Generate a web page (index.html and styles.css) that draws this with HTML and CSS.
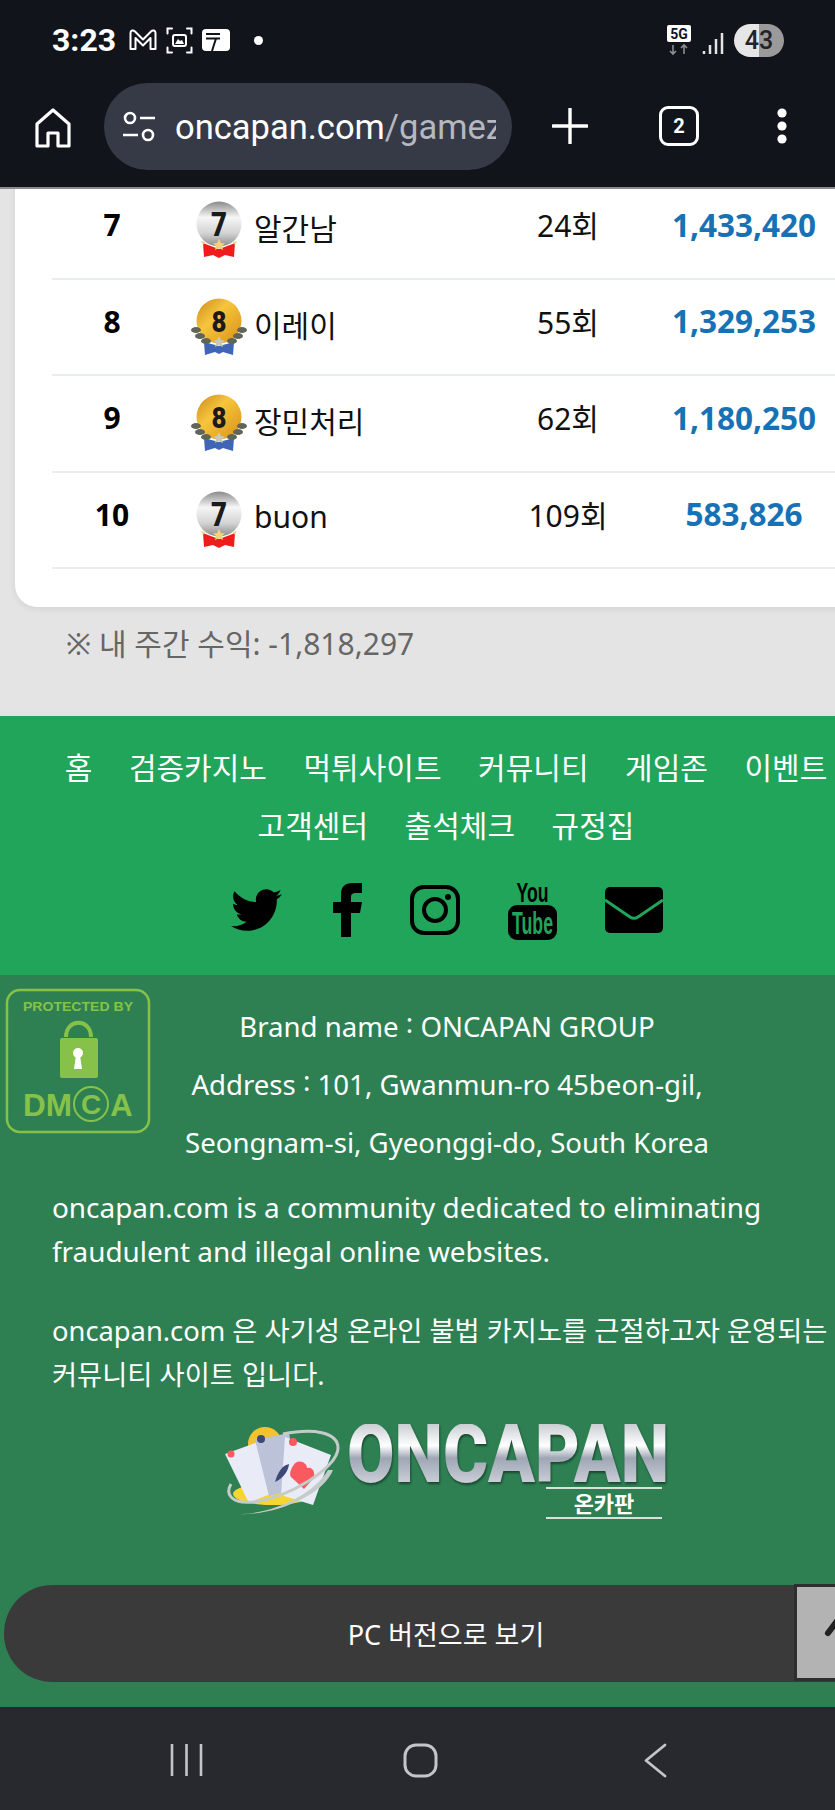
FILE: index.html
```html
<!DOCTYPE html>
<html lang="ko">
  <head>
    <meta charset="utf-8" />
    <meta name="viewport" content="width=device-width, initial-scale=1.0" />
    <title>oncapan.com</title>
    <link rel="stylesheet" href="styles.css">
  </head>
  <body>
    <svg class="defs" width="0" height="0">
      <defs>
        <linearGradient id="silver" x1="0" y1="0" x2="0" y2="1">
          <stop offset="0" stop-color="#8a8a8a" />
          <stop offset="0.35" stop-color="#f6f6f6" />
          <stop offset="0.7" stop-color="#d4d4d4" />
          <stop offset="1" stop-color="#8c8c8c" />
        </linearGradient>
        <linearGradient id="gold" x1="0" y1="0" x2="1" y2="1">
          <stop offset="0" stop-color="#c98a1c" />
          <stop offset="0.4" stop-color="#f6c53c" />
          <stop offset="1" stop-color="#d98f18" />
        </linearGradient>
        <symbol id="badge7" viewBox="0 0 56 58">
          <path d="M12 42l5 2 11 4 11-4 5-2-1 14-9-2-6 3-6-3-9 2z" fill="#ef1c1c" />
          <circle cx="28" cy="23" r="22.500" fill="url(#silver)" />
          <path d="M28 38l2 4 4 .4-3 2.600 1 4-4-2-4 2 1-4-3-2.600 4-.4z" fill="#f3d27a" />
          <path d="M10 40l4 1-2 3zM46 40l-4 1 2 3z" fill="#f3d27a" />
          <text x="28" y="35" class="badge-num" textLength="16" lengthAdjust="spacingAndGlyphs">7</text>
        </symbol>
        <symbol id="badge8" viewBox="0 0 56 58">
          <path d="M13 44l15 4 15-4-1 13-10-3-4 2-4-2-10 3z" fill="#3f66b5" />
          <circle cx="28" cy="23" r="22.500" fill="url(#gold)" />
          <g fill="#5f6658">
            <ellipse cx="5" cy="32" rx="5" ry="3" />
            <ellipse cx="9" cy="38" rx="5" ry="3" />
            <ellipse cx="15" cy="43" rx="5" ry="3" />
            <ellipse cx="51" cy="32" rx="5" ry="3" />
            <ellipse cx="47" cy="38" rx="5" ry="3" />
            <ellipse cx="41" cy="43" rx="5" ry="3" />
          </g>
          <path d="M28 38l2 4 4 .4-3 2.600 1 4-4-2-4 2 1-4-3-2.600 4-.4z" fill="#c9c9b8" />
          <text x="28" y="34" class="badge-num badge-num-8" textLength="15" lengthAdjust="spacingAndGlyphs">8</text>
        </symbol>
      </defs>
    </svg>

    <div class="topbar">
      <div class="status">
        <span class="clock">3:23</span>
        <svg class="st-icon" width="28" height="22" viewBox="0 0 28 22">
          <path d="M1.500 20V4c0-2.500 2.500-3.500 4.500-1.500l8 8 8-8c2-2 4.500-1 4.500 1.500v16h-5V9l-7.500 7.500L6.500 9v11z" fill="none" stroke="#fff" stroke-width="2" stroke-linejoin="round" />
        </svg>
        <svg class="st-icon" width="27" height="27" viewBox="0 0 27 27">
          <path d="M6 1.500H1.500v5M21 1.500h4.500v5M6 25.500H1.500v-5M21 25.500h4.500v-5" fill="none" stroke="#fff" stroke-width="2" stroke-linecap="round" />
          <rect x="7" y="8" width="13" height="11" rx="2" fill="none" stroke="#fff" stroke-width="2" />
          <path d="M9 17l3-5 2 2 2-1 2 4z" fill="#fff" />
        </svg>
        <svg class="st-icon" width="28" height="22" viewBox="0 0 28 22">
          <rect width="28" height="22" rx="4" fill="#fff" />
          <path d="M4 5h14M4 9.500h14M14 9.500L10 22" fill="none" stroke="#12141b" stroke-width="2" />
        </svg>
        <span class="st-dot"></span>
        <span class="st-right">
          <svg width="26" height="32" viewBox="0 0 26 32">
            <rect x="1" y="1" width="24" height="17" rx="2" fill="#fff" />
            <text x="13" y="15" class="five-g">5G</text>
            <path d="M7 21v9M4 27l3 3 3-3M18 30v-9M15 24l3-3 3 3" fill="none" stroke="#8d8d8d" stroke-width="1.600" />
          </svg>
          <svg class="signal" width="22" height="24" viewBox="0 0 22 24">
            <path d="M2 20v3M8 14v9M14 8v15M20 2v21" stroke="#e4e4e4" stroke-width="2.500" />
          </svg>
          <span class="battery">43</span>
        </span>
      </div>
      <div class="toolbar">
        <svg class="tb-home" width="36" height="40" viewBox="0 0 36 40">
          <path d="M2 38V16L18 2l16 14v22H23V25H13v13z" fill="none" stroke="#fff" stroke-width="3.200" stroke-linejoin="round" />
        </svg>
        <div class="pill">
          <svg width="34" height="32" viewBox="0 0 34 32">
            <circle cx="8" cy="7" r="5" fill="none" stroke="#fff" stroke-width="2.600" />
            <path d="M18 7h15M1 24h15" stroke="#fff" stroke-width="2.600" />
            <circle cx="26" cy="24" r="5" fill="none" stroke="#fff" stroke-width="2.600" />
          </svg>
          <div class="url">oncapan.com<span class="url-path">/gamez</span></div>
        </div>
        <svg class="tb-plus" width="36" height="36" viewBox="0 0 36 36">
          <path d="M18 1v34M1 18h34" stroke="#fff" stroke-width="3.400" stroke-linecap="round" />
        </svg>
        <span class="tabs">2</span>
        <svg class="tb-more" width="12" height="36" viewBox="0 0 12 36">
          <circle cx="6" cy="5" r="4.600" fill="#fff" />
          <circle cx="6" cy="18" r="4.600" fill="#fff" />
          <circle cx="6" cy="31" r="4.600" fill="#fff" />
        </svg>
      </div>
    </div>

    <main class="page">
      <section class="rank-section">
        <div class="rank-card">
          <ul class="rank-list">
            <li class="rank-row">
              <span class="pos">7</span>
              <span class="player"><svg class="badge"><use href="#badge7" /></svg><span class="name">알간남</span></span>
              <span class="count">24회</span>
              <span class="amount">1,433,420</span>
            </li>
            <li class="rank-row">
              <span class="pos">8</span>
              <span class="player"><svg class="badge"><use href="#badge8" /></svg><span class="name">이레이</span></span>
              <span class="count">55회</span>
              <span class="amount">1,329,253</span>
            </li>
            <li class="rank-row">
              <span class="pos">9</span>
              <span class="player"><svg class="badge"><use href="#badge8" /></svg><span class="name">장민처리</span></span>
              <span class="count">62회</span>
              <span class="amount">1,180,250</span>
            </li>
            <li class="rank-row">
              <span class="pos">10</span>
              <span class="player"><svg class="badge"><use href="#badge7" /></svg><span class="name">buon</span></span>
              <span class="count">109회</span>
              <span class="amount">583,826</span>
            </li>
          </ul>
        </div>
        <p class="my-profit">※ 내 주간 수익: -1,818,297</p>
      </section>

      <footer>
        <div class="foot-top">
          <nav class="foot-menu">
            <a>홈</a><a>검증카지노</a><a>먹튀사이트</a><a>커뮤니티</a><a>게임존</a><a>이벤트</a>
            <a>고객센터</a><a>출석체크</a><a>규정집</a>
          </nav>
          <div class="social">
            <svg class="tw" width="51" height="42" viewBox="0 0 512 416">
              <path d="M459.37 103.716c.325 4.548.325 9.097.325 13.645 0 138.72-105.583 298.558-298.558 298.558-59.452 0-114.68-17.219-161.137-47.106 8.447.974 16.568 1.299 25.34 1.299 49.055 0 94.213-16.568 130.274-44.832-46.132-.975-84.792-31.188-98.112-72.772 6.498.974 12.995 1.624 19.818 1.624 9.421 0 18.843-1.3 27.614-3.573-48.081-9.747-84.143-51.98-84.143-102.985v-1.299c13.969 7.797 30.214 12.67 47.431 13.319-28.264-18.843-46.781-51.005-46.781-87.391 0-19.492 5.197-37.36 14.294-52.954 51.655 63.675 129.3 105.258 216.365 109.807-1.624-7.797-2.599-15.918-2.599-24.04 0-57.828 46.782-104.934 104.934-104.934 30.213 0 57.502 12.67 76.67 33.137 23.715-4.548 46.456-13.32 66.599-25.34-7.798 24.366-24.366 44.833-46.132 57.827 21.117-2.273 41.584-8.122 60.426-16.243-14.292 20.791-32.161 39.308-52.628 54.253z" />
            </svg>
            <svg width="29" height="54" viewBox="0 0 29 54">
              <path d="M8 54V30H0V19h8v-8C8 3 13 0 20 0h9v10h-6c-3 0-5 1-5 4v5h11l-2 11h-9v24z" />
            </svg>
            <svg width="50" height="50" viewBox="0 0 50 50">
              <rect x="2" y="2" width="46" height="46" rx="12" fill="none" stroke="#000" stroke-width="4" />
              <circle cx="25" cy="25" r="11" fill="none" stroke="#000" stroke-width="4" />
              <circle cx="38" cy="12" r="3" />
            </svg>
            <svg width="49" height="60" viewBox="0 0 49 60">
              <text x="24.500" y="22" class="yt-you" textLength="32" lengthAdjust="spacingAndGlyphs">You</text>
              <rect y="25" width="49" height="35" rx="9" />
              <text x="24.500" y="54" class="yt-tube" textLength="41" lengthAdjust="spacingAndGlyphs">Tube</text>
            </svg>
            <svg width="58" height="46" viewBox="0 0 58 46">
              <rect width="58" height="46" rx="5" />
              <path d="M0 13l25 17c3 2 5 2 8 0l25-17" fill="none" stroke="#21a55a" stroke-width="3" />
            </svg>
          </div>
        </div>

        <div class="foot-info">
          <div class="brand-block">
            <svg class="dmca" width="146" height="146" viewBox="0 0 146 146">
              <rect x="2" y="2" width="142" height="142" rx="13" fill="none" stroke="#86c24a" stroke-width="2.500" />
              <text x="73" y="23" class="dmca-top" textLength="110" lengthAdjust="spacingAndGlyphs">PROTECTED BY</text>
              <path d="M61 49c0-19 25-19 25 0" fill="none" stroke="#86c24a" stroke-width="4" />
              <rect x="55" y="50" width="38" height="40" rx="2" fill="#86c24a" />
              <circle cx="73" cy="65" r="5" fill="#fff" />
              <path d="M71 67h4l2 14h-8z" fill="#fff" />
              <text x="42.500" y="128" class="dmca-word" textLength="49" lengthAdjust="spacingAndGlyphs">DM</text>
              <circle cx="86" cy="116" r="17" fill="none" stroke="#86c24a" stroke-width="2" />
              <text x="86" y="126" class="dmca-word dmca-c">C</text>
              <text x="116.500" y="128" class="dmca-word">A</text>
            </svg>
            <div class="brand-lines">
              <p>Brand name <span class="colon">:</span> ONCAPAN GROUP</p>
              <p>Address <span class="colon">:</span> 101, Gwanmun-ro 45beon-gil,</p>
              <p>Seongnam-si, Gyeonggi-do, South Korea</p>
            </div>
          </div>
          <p class="about">oncapan.com is a community dedicated to eliminating fraudulent and illegal online websites.</p>
          <p class="about about-kr">oncapan.com 은 사기성 온라인 불법 카지노를 근절하고자 운영되는 커뮤니티 사이트 입니다.</p>
          <div class="logo">
            <svg width="122" height="94" viewBox="0 0 122 94">
              <circle cx="42" cy="20" r="17" fill="#f2c230" />
              <ellipse cx="50" cy="70" rx="40" ry="11" fill="#f5d532" />
              <path d="M2 30l36-13 16 50-28 12z" fill="#e9ecf7" />
              <path d="M32 16l34-7 10 55-30 8z" fill="#bcc3d8" />
              <path d="M62 13l46 18-18 50-32-10z" fill="#e9ecf7" />
              <path d="M70 42c4-8 14-4 14 2 6-2 10 6 5 12l-8 9-13-12c-2-3 0-8 2-11z" fill="#f9595f" />
              <path d="M54 52c4-8 6-10 12-12-1 8-6 14-14 18z" fill="#3c4876" />
              <circle cx="70" cy="18" r="4" fill="#f9595f" />
              <circle cx="38" cy="15" r="4" fill="#3c4876" />
              <circle cx="8" cy="30" r="3.500" fill="#f9595f" />
              <path d="M60 10c30-6 55-2 55 14 0 20-50 50-85 54C8 80 2 70 8 60" fill="none" stroke="#c5cbc8" stroke-width="3" />
              <path d="M105 46c-15 25-55 44-90 44 35 2 85-18 95-44z" fill="#c5cbc8" />
            </svg>
            <div class="logo-text">
              <span class="logo-name">ONCAPAN</span>
              <span class="logo-kr">온카판</span>
            </div>
          </div>
          <div class="pc-bar">
            <a class="pc-link">PC 버전으로 보기</a>
            <span class="to-top">
              <svg width="38" height="90" viewBox="0 0 38 90"><path d="M31 46l9-12" stroke="#222" stroke-width="6" stroke-linecap="round" /></svg>
            </span>
          </div>
        </div>
      </footer>
    </main>

    <div class="navbar">
      <svg width="33" height="34" viewBox="0 0 33 34">
        <path d="M2 1v32M16.500 1v32M31 1v32" stroke="#c4c5c8" stroke-width="2.600" />
      </svg>
      <svg width="35" height="35" viewBox="0 0 35 35">
        <rect x="2" y="2" width="31" height="31" rx="11" fill="none" stroke="#c4c5c8" stroke-width="3" />
      </svg>
      <svg class="nav-back" width="24" height="35" viewBox="0 0 24 35">
        <path d="M22 2L3 17.500 22 33" fill="none" stroke="#c4c5c8" stroke-width="2.800" stroke-linecap="round" stroke-linejoin="round" />
      </svg>
    </div>
  </body>
</html>
```

FILE: styles.css
```css
html, body {
  margin: 0;
  padding: 0;
}

body {
  width: 835px;
  height: 1810px;
  overflow: hidden;
  font-family: "Noto Sans", "Noto Sans CJK KR", sans-serif;
  background: #e4e4e4;
  display: flex;
  flex-direction: column;
}

.defs {
  position: absolute;
}

/* phone + browser chrome */
.topbar {
  height: 189px;
  flex: none;
  box-sizing: border-box;
  background: #12141b;
  border-bottom: 2px solid #8b8c90;
  color: #fff;
}

.status {
  height: 80px;
  box-sizing: border-box;
  padding: 0 51px 0 52px;
  display: flex;
  align-items: center;
  gap: 9px;
}

.clock {
  font-family: "Roboto", sans-serif;
  font-size: 32px;
  font-weight: 700;
  margin-right: 4px;
}

.st-dot {
  width: 9px;
  height: 9px;
  margin-left: 15px;
  border-radius: 50%;
  background: #fff;
}

.st-right {
  margin-left: auto;
  display: flex;
  align-items: center;
  gap: 10px;
}

.five-g {
  font-family: "Roboto", sans-serif;
  font-size: 14px;
  font-weight: 700;
  text-anchor: middle;
  fill: #12141b;
}

.signal {
  margin-top: 6px;
}

.battery {
  width: 50px;
  height: 33px;
  border-radius: 17px;
  background: linear-gradient(90deg, #e6e6e6 0 50%, #9a9a9a 50%);
  color: #22242a;
  font-family: "Roboto", sans-serif;
  font-size: 25px;
  font-weight: 500;
  text-align: center;
  line-height: 33px;
}

.toolbar {
  height: 106px;
  padding: 3px 0 0 35px;
  box-sizing: border-box;
  display: flex;
  align-items: flex-start;
}

.tb-home {
  margin-top: 25px;
}

.pill {
  width: 408px;
  height: 87px;
  margin-left: 33px;
  border-radius: 44px;
  background: #363a47;
  display: flex;
  align-items: center;
  padding-left: 18px;
  box-sizing: border-box;
  gap: 19px;
}

.url {
  width: 321px;
  overflow: hidden;
  white-space: nowrap;
  font-family: "Roboto", sans-serif;
  font-size: 34.500px;
  color: #fff;
}

.url-path {
  color: #b6b8c0;
}

.tb-plus {
  margin: 25px 0 0 40px;
}

.tabs {
  width: 34px;
  height: 34px;
  margin: 23px 0 0 71px;
  border: 3px solid #fff;
  border-radius: 9px;
  font-family: "Roboto", sans-serif;
  font-size: 20px;
  font-weight: 700;
  line-height: 34px;
  text-align: center;
}

.tb-more {
  margin: 25px 0 0 77px;
}

/* page */
.page {
  flex: 1;
  overflow: hidden;
}

.rank-section {
  display: flow-root;
  height: 527px;
  padding-left: 15px;
  box-sizing: border-box;
}

.rank-card {
  width: 880px;
  height: 424px;
  margin-top: -6px;
  box-sizing: border-box;
  padding: 0 0 38px 37px;
  background: #fff;
  border-radius: 0 0 22px 22px;
  box-shadow: 0 2px 6px rgba(0, 0, 0, 0.08);
}

.rank-list {
  list-style: none;
  margin: 0;
  padding: 0;
}

.rank-row {
  height: 96.500px;
  box-sizing: border-box;
  display: grid;
  grid-template-columns: 120px 328px 136px 216px;
  align-items: center;
  border-bottom: 2px solid #e9edf0;
  font-size: 30px;
  color: #111;
}

.pos {
  text-align: center;
  font-weight: 700;
  font-size: 30px;
  color: #000;
  padding-bottom: 11px;
}

.player {
  display: flex;
  align-items: center;
  padding-left: 19px;
  font-size: 30px;
}

.name {
  padding-bottom: 6px;
}

.badge {
  width: 56px;
  height: 58px;
  margin-right: 7px;
  flex: none;
}

.badge-num {
  font-family: "Roboto", sans-serif;
  font-size: 33px;
  font-weight: 900;
  text-anchor: middle;
  fill: #1b1b1b;
}

.badge-num-8 {
  font-size: 30px;
}

.count {
  text-align: center;
  padding-bottom: 12px;
}

.amount {
  text-align: center;
  font-size: 31.500px;
  font-weight: 700;
  color: #1672b5;
  padding-bottom: 12px;
}

.my-profit {
  margin: 13px 0 0 51px;
  font-size: 30px;
  color: #666;
}

/* footer */
.foot-top {
  height: 259px;
  background: #21a55a;
  padding-top: 23px;
  box-sizing: border-box;
}

.foot-menu {
  width: 892px;
  display: flex;
  flex-wrap: wrap;
  justify-content: center;
  gap: 0 36.600px;
  font-size: 30px;
  line-height: 58px;
  color: #fff;
}

.social {
  width: 893px;
  margin-top: 25px;
  display: flex;
  justify-content: center;
  align-items: center;
  gap: 48px;
}

.tw {
  margin-right: 3px;
}

.yt-you,
.yt-tube {
  font-family: "Liberation Sans", sans-serif;
  font-weight: 700;
  text-anchor: middle;
}

.yt-you {
  font-size: 27px;
}

.yt-tube {
  font-size: 31px;
  fill: #21a55a;
}

.foot-info {
  height: 732px;
  background: #2e8053;
  color: #fff;
  box-sizing: border-box;
  padding-top: 13px;
}

.brand-block {
  height: 197px;
  display: flex;
  padding-left: 5px;
}

.dmca {
  flex: none;
}

.dmca-top {
  font-family: "Liberation Sans", sans-serif;
  font-size: 12px;
  font-weight: 700;
  text-anchor: middle;
  fill: #86c24a;
}

.dmca-word {
  font-family: "Liberation Sans", sans-serif;
  font-size: 31px;
  font-weight: 700;
  text-anchor: middle;
  fill: #86c24a;
}

.dmca-c {
  font-size: 28px;
}

.brand-lines {
  width: 592px;
  padding-top: 9px;
  text-align: center;
  font-size: 27.600px;
  line-height: 58px;
}

.brand-lines p {
  margin: 0;
}

.colon {
  line-height: 1;
  vertical-align: 4px;
}

.about {
  width: 790px;
  margin: 0 0 36px 52px;
  font-size: 27.900px;
  line-height: 44px;
  word-break: keep-all;
}

.about-kr {
  font-size: 27.300px;
}

.logo {
  display: flex;
  align-items: flex-start;
  margin: -9px 0 0 223px;
  height: 161px;
  gap: 2px;
}

.logo-text {
  width: 318px;
  display: flex;
  flex-direction: column;
  align-items: flex-end;
}

.logo-name {
  align-self: flex-start;
  font-family: "Roboto", sans-serif;
  font-size: 81px;
  font-weight: 900;
  line-height: 62px;
  transform: scaleX(0.85);
  transform-origin: left top;
  background: linear-gradient(180deg, #c9cdd2 0%, #fff 35%, #9fa6b4 55%, #d0d4dc 100%);
  -webkit-background-clip: text;
  background-clip: text;
  color: transparent;
  filter: drop-shadow(1px 2px 1px rgba(0, 0, 0, 0.45));
}

.logo-kr {
  width: 116px;
  margin: 1px 3px 0 0;
  border-top: 2px solid #d5e3da;
  border-bottom: 2px solid #d5e3da;
  font-size: 22px;
  font-weight: 700;
  line-height: 28px;
  text-align: center;
}

.pc-bar {
  height: 97px;
  margin-left: 4px;
  background: #3b3a3b;
  border-radius: 48px 0 0 48px;
  position: relative;
  display: flex;
  align-items: center;
  justify-content: center;
  padding-left: 53px;
  box-sizing: border-box;
}

.pc-link {
  font-size: 27px;
  color: #fff;
}

.to-top {
  position: absolute;
  right: 0;
  top: -1px;
  width: 41px;
  height: 97px;
  box-sizing: border-box;
  background: #b3b3b3;
  border: 3px solid #2e2e2e;
  border-right: 0;
  overflow: hidden;
}

.navbar {
  height: 103px;
  flex: none;
  background: #28292e;
  display: flex;
  align-items: flex-start;
  box-sizing: border-box;
  padding: 36px 0 0 170px;
  gap: 200px;
}

.nav-back {
  margin-left: 5px;
}
```
